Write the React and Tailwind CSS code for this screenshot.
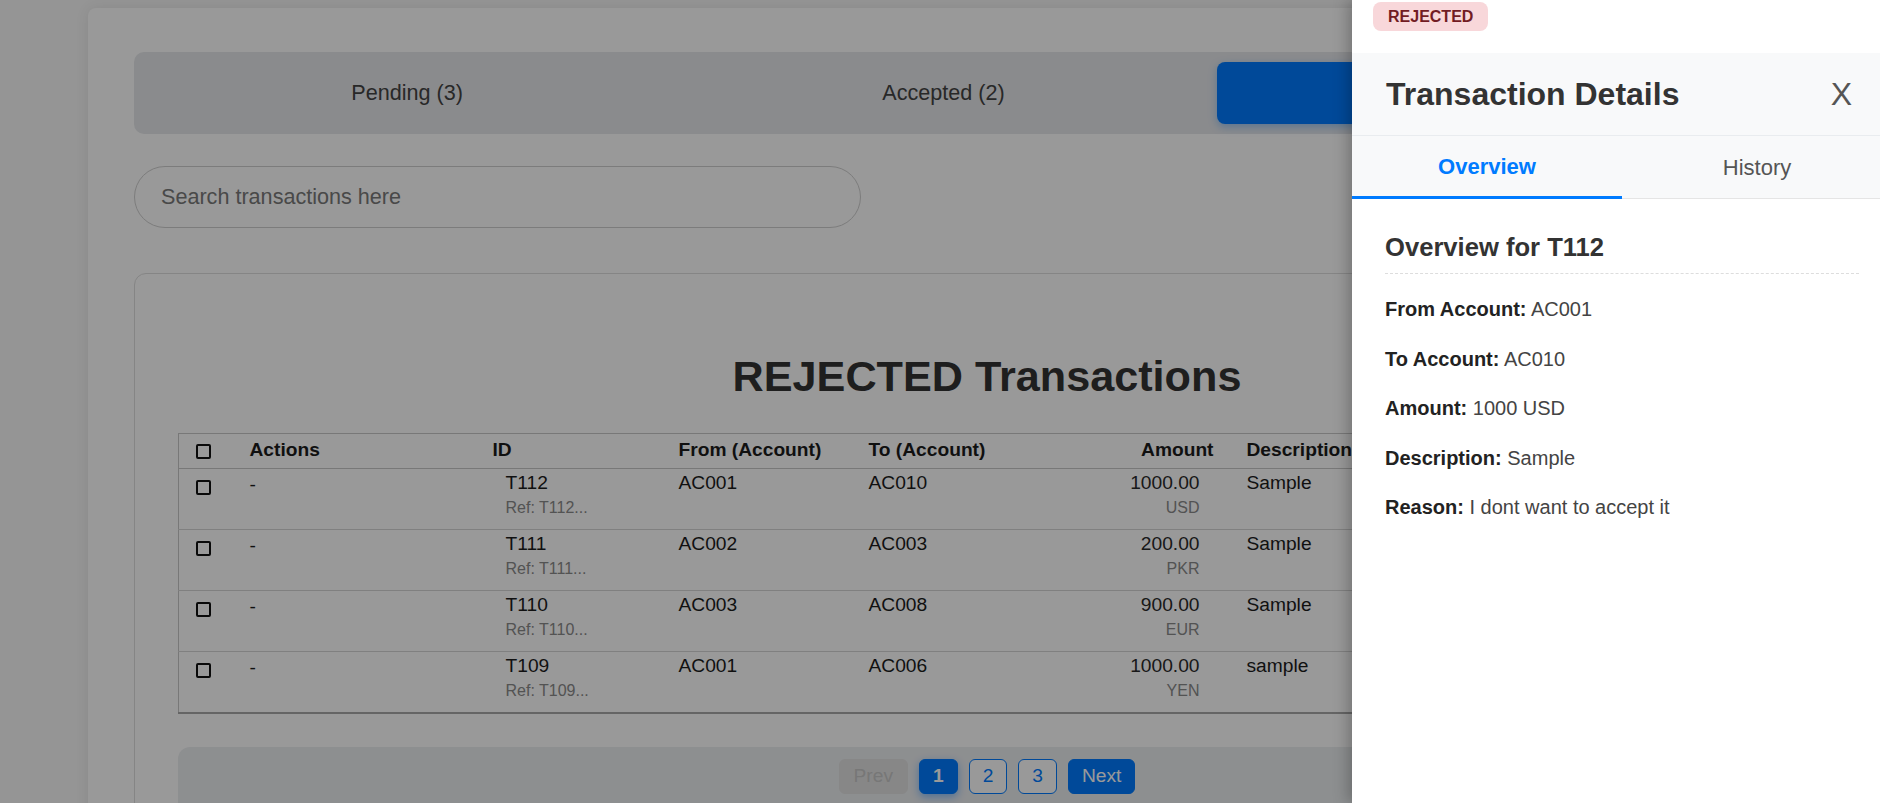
import React from 'react';

const rows = [
  { id: 'T112', from: 'AC001', to: 'AC010', amount: '1000.00', cur: 'USD', desc: 'Sample' },
  { id: 'T111', from: 'AC002', to: 'AC003', amount: '200.00', cur: 'PKR', desc: 'Sample' },
  { id: 'T110', from: 'AC003', to: 'AC008', amount: '900.00', cur: 'EUR', desc: 'Sample' },
  { id: 'T109', from: 'AC001', to: 'AC006', amount: '1000.00', cur: 'YEN', desc: 'sample' },
];

function Box({ className }) {
  return <span className={'block h-[15px] w-[15px] rounded-[2px] border-2 border-[#111] bg-white ' + className} />;
}

function Field({ label, value }) {
  return (
    <p className="text-[20px] leading-[23px] text-[#444]">
      <strong className="font-bold text-[#222]">{label}:</strong> {value}
    </p>
  );
}

export default function App() {
  return (
    <div className="relative h-screen w-screen overflow-hidden bg-[#f8f8f8] font-['Liberation_Sans',Arial,sans-serif]">
      {/* page */}
      <div className="ml-[88px] mt-[8px] min-h-[900px] w-[1711px] rounded-lg bg-white px-[46px] pt-[44px] shadow-[0_0_14px_rgba(0,0,0,0.08)]">
        <div className="flex h-[82px] gap-[10px] rounded-[10px] bg-[#e6e8eb] p-[10px]">
          <button className="flex h-[62px] flex-1 items-center justify-center rounded-lg text-[21.6px] text-[#444]">Pending (3)</button>
          <button className="flex h-[62px] flex-1 items-center justify-center rounded-lg text-[21.6px] text-[#444]">Accepted (2)</button>
          <button className="flex h-[62px] flex-1 items-center justify-center rounded-lg bg-[#007bff] text-[21.6px] text-white shadow-[0_3px_8px_rgba(0,123,255,0.35)]">Rejected (4)</button>
        </div>

        <input
          className="mt-[32px] block h-[62px] w-[727px] rounded-full border border-[#cfcfcf] px-[26px] text-[21.6px] text-[#333] outline-none placeholder:text-[#7a7a7a]"
          placeholder="Search transactions here"
        />

        <div className="mt-[45px] w-[1706px] rounded-xl border border-[#dedede] bg-white px-[43px] pt-[77px]">
          <h1 className="text-center text-[43.2px] font-bold leading-[50px] text-[#333]">REJECTED Transactions</h1>

          <table className="mt-[32px] w-[1618px] table-fixed border-collapse border border-b-2 border-[#c8c8c8] border-b-[#a8a8a8] text-[19.2px] leading-[22px] text-[#1c1c1c]">
            <colgroup>
              <col className="w-[59px]" />
              <col className="w-[243px]" />
              <col className="w-[186px]" />
              <col className="w-[190px]" />
              <col className="w-[200px]" />
              <col className="w-[178px]" />
              <col />
            </colgroup>
            <thead>
              <tr className="border-b border-[#c8c8c8]">
                <th className="pb-[7px] pl-[17px] pt-[5px] align-top"><Box className="mt-[5px]" /></th>
                <th className="pb-[7px] pl-[12px] pt-[5px] text-left align-top font-bold">Actions</th>
                <th className="pb-[7px] pl-[12px] pt-[5px] text-left align-top font-bold">ID</th>
                <th className="pb-[7px] pl-[12px] pt-[5px] text-left align-top font-bold">From (Account)</th>
                <th className="pb-[7px] pl-[12px] pt-[5px] text-left align-top font-bold">To (Account)</th>
                <th className="pb-[7px] pr-[21px] pt-[5px] text-right align-top font-bold">Amount</th>
                <th className="pb-[7px] pl-[12px] pt-[5px] text-left align-top font-bold">Description</th>
              </tr>
            </thead>
            <tbody>
              {rows.map((r, i) => (
                <tr key={r.id} className={i < rows.length - 1 ? 'border-b border-[#d6d6d6]' : ''}>
                  <td className="h-[61px] pl-[17px] pt-[3px] align-top"><Box className="mt-[8px]" /></td>
                  <td className="h-[61px] pl-[12px] pt-[5px] align-top">-</td>
                  <td className="h-[61px] pl-[25px] pt-[3px] align-top">
                    <div>{r.id}</div>
                    <div className="mt-[5px] text-[16px] leading-[18px] text-[#8a8a8a]">Ref: {r.id}...</div>
                  </td>
                  <td className="h-[61px] pl-[12px] pt-[3px] align-top">{r.from}</td>
                  <td className="h-[61px] pl-[12px] pt-[3px] align-top">{r.to}</td>
                  <td className="h-[61px] pr-[35px] pt-[3px] text-right align-top">
                    <div className="text-[#2a2a2a]">{r.amount}</div>
                    <div className="mt-[5px] text-[16px] leading-[18px] text-[#8a8a8a]">{r.cur}</div>
                  </td>
                  <td className="h-[61px] pl-[12px] pt-[3px] align-top">{r.desc}</td>
                </tr>
              ))}
            </tbody>
          </table>

          <div className="mt-[33px] flex h-[80px] w-[1618px] justify-center gap-[11px] rounded-t-xl bg-[#eceef1] pt-[12px] text-[19.2px]">
            <button className="h-[35px] rounded-[6px] border border-[#e2e2e2] bg-[#e2e2e2] px-[14px] text-[#c6c6c6]">Prev</button>
            <button className="h-[35px] rounded-[6px] border border-[#007bff] bg-[#007bff] px-[13px] font-bold text-white shadow-[0_3px_8px_rgba(0,123,255,0.45)]">1</button>
            <button className="h-[35px] rounded-[6px] border border-[#007bff] bg-white px-[13px] text-[#007bff]">2</button>
            <button className="h-[35px] rounded-[6px] border border-[#007bff] bg-white px-[13px] text-[#007bff]">3</button>
            <button className="h-[35px] rounded-[6px] border border-[#007bff] bg-[#007bff] px-[13px] text-white">Next</button>
          </div>
        </div>
      </div>

      {/* overlay */}
      <div className="absolute inset-0 bg-black/40" />

      {/* drawer */}
      <aside className="absolute bottom-0 left-[1352px] top-0 w-[540px] bg-white shadow-[-4px_0_14px_rgba(0,0,0,0.25)]">
        <div className="h-[53px] pl-[21px] pt-[2px]">
          <span className="inline-block h-[29px] rounded-[8px] bg-[#f8d7da] px-[15px] text-[16px] font-bold leading-[29px] text-[#721c24]">REJECTED</span>
        </div>
        <div className="flex h-[83px] items-center justify-between border-b border-[#e9ecef] bg-[#f8f9fa] pl-[34px] pr-[32px]">
          <h2 className="text-[32px] font-bold leading-[37px] text-[#333]">Transaction Details</h2>
          <button className="px-[8px] text-[32px] leading-none text-[#555]">X</button>
        </div>
        <div className="flex h-[63px] border-b border-[#e5e5e5] bg-[#f8f9fa]">
          <button className="-mb-px flex-1 border-b-[3px] border-[#007bff] text-[22px] font-bold text-[#007bff]">Overview</button>
          <button className="flex-1 text-[22px] text-[#555]">History</button>
        </div>
        <div className="px-[33px] pt-[34px]">
          <h3 className="border-b border-dashed border-[#dddddd] pb-[11px] text-[25.6px] font-bold leading-[29px] text-[#333]">Overview for T112</h3>
          <div className="mt-[24px] flex flex-col gap-[26.5px]">
            <Field label="From Account" value="AC001" />
            <Field label="To Account" value="AC010" />
            <Field label="Amount" value="1000 USD" />
            <Field label="Description" value="Sample" />
            <Field label="Reason" value="I dont want to accept it" />
          </div>
        </div>
      </aside>
    </div>
  );
}
